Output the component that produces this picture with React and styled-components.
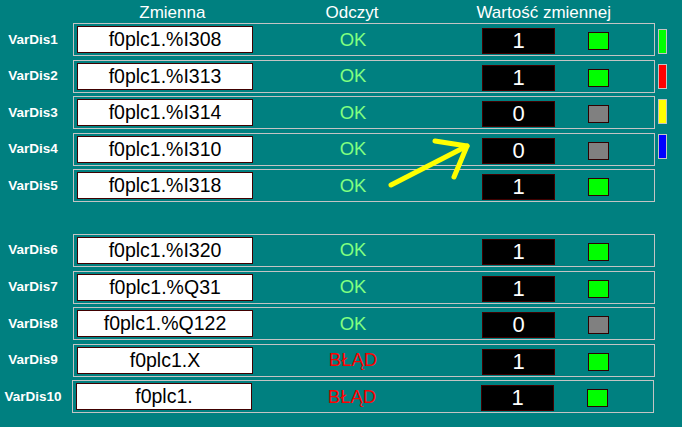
import React from 'react'
import styled, { createGlobalStyle } from 'styled-components'

const Global = createGlobalStyle`
  body {
    margin: 0;
    background: #008080;
    font-family: "Liberation Sans", Arial, sans-serif;
  }
`

const Page = styled.div`
  position: relative;
  width: 682px;
  height: 427px;
  display: flex;
  background: #008080;
  overflow: hidden;
`
const Table = styled.div`
  width: 655px;
  display: flex;
  flex-direction: column;
`
const Header = styled.div`
  display: flex;
  height: 20px;
  padding-top: 3px;
  padding-left: 73px;
  color: #ffffff;
  font-size: 17px;
  line-height: 20px;
`
const HeadCell = styled.div`
  width: ${p => p.$w}px;
  text-align: center;
  white-space: nowrap;
`
const Group = styled.div`
  display: flex;
  flex-direction: column;
  gap: 3.6px;
  margin-top: ${p => p.$top || 0}px;
`
const Row = styled.div`
  display: flex;
  align-items: center;
  height: 33px;
`
const Label = styled.div`
  width: 66px;
  text-align: center;
  color: #ffffff;
  font-weight: bold;
  font-size: 13.5px;
  margin-top: -1px;
`
const Frame = styled.div`
  box-sizing: border-box;
  margin-left: ${p => (p.$shift ? 6 : 7)}px;
  width: 582px;
  height: 33px;
  border: 1px solid #c4c4c4;
  display: flex;
  align-items: center;
`
const Field = styled.div`
  box-sizing: border-box;
  margin-left: 3px;
  width: 176px;
  height: 27px;
  background: #ffffff;
  border: 1px solid #400000;
  color: #000000;
  font-size: 19.5px;
  line-height: 25px;
  text-align: center;
`
const Status = styled.div`
  width: 200px;
  text-align: center;
  font-size: 18.5px;
  color: ${p => (p.$error ? '#ff0000' : '#80ff80')};
`
const Value = styled.div`
  box-sizing: border-box;
  margin-left: 29px;
  margin-top: 3px;
  width: 73px;
  height: 26px;
  background: #000000;
  border: 1px solid #400000;
  color: #ffffff;
  font-size: 22px;
  line-height: 24px;
  text-align: center;
`
const Lamp = styled.div`
  box-sizing: border-box;
  margin-left: 33px;
  margin-top: 3px;
  width: 21px;
  height: 18px;
  border: 1px solid #300000;
  background: ${p => (p.$on ? '#00ff00' : '#808080')};
`
const Legend = styled.div`
  margin-left: 3px;
  padding-top: 29px;
  display: flex;
  flex-direction: column;
  gap: 10px;
`
const Swatch = styled.div`
  box-sizing: border-box;
  width: 9px;
  height: 25px;
  border: 1px solid #c4c4c4;
  background: ${p => p.$color};
`
const Arrow = styled.svg`
  position: absolute;
  left: 0;
  top: 0;
  pointer-events: none;
`

const first = [
  ['VarDis1', 'f0plc1.%I308', false, 1],
  ['VarDis2', 'f0plc1.%I313', false, 1],
  ['VarDis3', 'f0plc1.%I314', false, 0],
  ['VarDis4', 'f0plc1.%I310', false, 0],
  ['VarDis5', 'f0plc1.%I318', false, 1],
]
const second = [
  ['VarDis6', 'f0plc1.%I320', false, 1],
  ['VarDis7', 'f0plc1.%Q31', false, 1],
  ['VarDis8', 'f0plc1.%Q122', false, 0],
  ['VarDis9', 'f0plc1.X', true, 1],
  ['VarDis10', 'f0plc1.', true, 1],
]

const VarRow = ({ item, shift }) => {
  const [name, addr, err, val] = item
  return (
    <Row>
      <Label>{name}</Label>
      <Frame $shift={shift}>
        <Field>{addr}</Field>
        <Status $error={err}>{err ? 'BŁĄD' : 'OK'}</Status>
        <Value>{val}</Value>
        <Lamp $on={val === 1} />
      </Frame>
    </Row>
  )
}

const App = () => {
  return (
    <Page>
      <Global />
      <Table>
        <Header>
          <HeadCell $w={199}>Zmienna</HeadCell>
          <HeadCell $w={161}>Odczyt</HeadCell>
          <HeadCell $w={223}>Wartość zmiennej</HeadCell>
        </Header>
        <Group>
          {first.map(r => <VarRow key={r[0]} item={r} />)}
        </Group>
        <Group $top={31.6}>
          {second.map(r => <VarRow key={r[0]} item={r} shift={r[0] === 'VarDis10'} />)}
        </Group>
      </Table>
      <Legend>
        <Swatch $color="#00ff00" />
        <Swatch $color="#ff0000" />
        <Swatch $color="#ffff00" />
        <Swatch $color="#0000ff" />
      </Legend>
      <Arrow width="682" height="427" viewBox="0 0 682 427">
        <g stroke="#ffff00" strokeWidth="5" strokeLinecap="round" strokeLinejoin="round" fill="none">
          <line x1="391" y1="185" x2="467" y2="146" />
          <polyline points="435,141 467,146 454,177" />
        </g>
      </Arrow>
    </Page>
  )
}

export default App
